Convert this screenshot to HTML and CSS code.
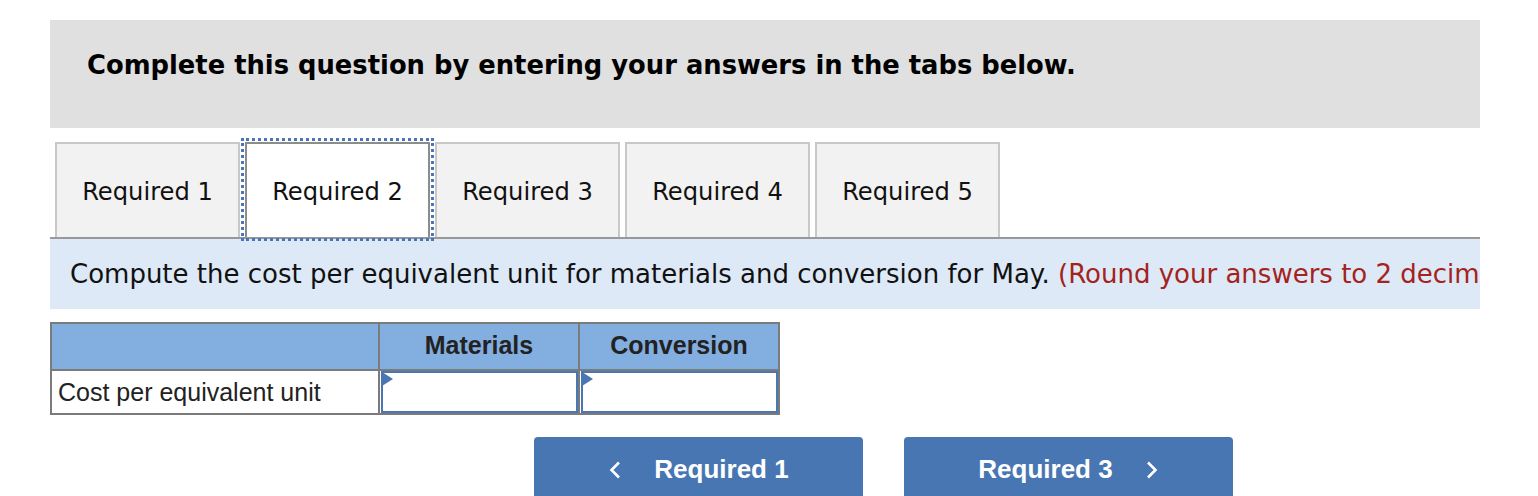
FILE: index.html
```html
<!DOCTYPE html>
<html>
<head>
<meta charset="utf-8">
<link rel="stylesheet" href="styles.css">
</head>
<body>
<div class="page">
  <div class="header">Complete this question by entering your answers in the tabs below.</div>
  <div class="tabs">
    <div class="tab">Required 1</div>
    <div class="tab active">Required 2</div>
    <div class="tab">Required 3</div>
    <div class="tab">Required 4</div>
    <div class="tab">Required 5</div>
  </div>
  <div class="prompt">Compute the cost per equivalent unit for materials and conversion for May. <span class="note">(Round your answers to 2 decimal places.)</span></div>
  <table class="grid">
    <tr class="head">
      <th class="label-col"></th>
      <th class="val-col">Materials</th>
      <th class="val-col">Conversion</th>
    </tr>
    <tr class="row">
      <td class="label">Cost per equivalent unit</td>
      <td class="cell"><div class="input"><span class="flag"></span></div></td>
      <td class="cell"><div class="input"><span class="flag"></span></div></td>
    </tr>
  </table>
  <div class="nav">
    <div class="btn">
      <svg class="chev" width="14" height="18" viewBox="0 0 14 18"><path d="M11 1.5 L3.5 9 L11 16.5" fill="none" stroke="#fff" stroke-width="2.6" stroke-linejoin="miter"/></svg>
      <span>Required 1</span>
    </div>
    <div class="btn">
      <span>Required 3</span>
      <svg class="chev" width="14" height="18" viewBox="0 0 14 18"><path d="M3 1.5 L10.5 9 L3 16.5" fill="none" stroke="#fff" stroke-width="2.6" stroke-linejoin="miter"/></svg>
    </div>
  </div>
</div>
</body>
</html>
```
FILE: styles.css
```css
html, body {
  margin: 0;
  padding: 0;
  background: #fff;
}
body {
  font-family: "DejaVu Sans", Verdana, sans-serif;
  color: #111;
  overflow: hidden;
}
.page {
  width: 1430px;
  margin-left: 50px;
  padding-top: 20px;
}
.header {
  background: #e0e0e0;
  height: 108px;
  box-sizing: border-box;
  padding: 29px 0 0 37px;
  font-weight: bold;
  font-size: 25.8px;
  line-height: 32px;
  color: #000;
  white-space: nowrap;
}
.tabs {
  display: flex;
  gap: 5px;
  padding-left: 5px;
  margin-top: 14px;
  height: 95px;
}
.tab {
  width: 185px;
  box-sizing: border-box;
  border: 2px solid #c8c8c8;
  border-bottom: none;
  background: #f2f2f2;
  font-size: 24.2px;
  color: #111;
  display: flex;
  align-items: center;
  justify-content: center;
  padding-top: 2px;
  white-space: nowrap;
}
.tab.active {
  background: #fff;
  border-color: #8c8c8c;
  outline: 3px dotted #4a76b8;
  outline-offset: 1px;
}
.prompt {
  border-top: 2px solid #999;
  background: #dde9f6;
  height: 72px;
  box-sizing: border-box;
  padding: 20px 0 0 20px;
  font-size: 26px;
  line-height: 30px;
  white-space: nowrap;
  overflow: hidden;
  color: #111;
}
.note {
  color: #a4231c;
}
.grid {
  margin-top: 13px;
  border-collapse: collapse;
  font-family: "Liberation Sans", Arial, sans-serif;
  color: #222;
}
.grid th, .grid td {
  border: 2px solid #7b7b7b;
  padding: 0;
}
.head th {
  background: #83aee0;
  height: 43px;
  font-size: 25px;
  font-weight: bold;
  text-align: center;
  vertical-align: middle;
  padding-bottom: 2px;
}
.label-col {
  width: 326px;
}
.val-col {
  width: 198px;
}
.row td {
  height: 42px;
}
.label {
  font-size: 25px;
  padding-left: 6px !important;
  vertical-align: middle;
  background: #fff;
}
.cell {
  background: #fff;
}
.input {
  position: relative;
  height: 42px;
  box-sizing: border-box;
  border: 2px solid #4a76b4;
  margin: 0 0 0 1px;
  background: #fff;
}
.flag {
  position: absolute;
  left: -1px;
  top: -1px;
  width: 0;
  height: 0;
  border-top: 7px solid transparent;
  border-bottom: 7px solid transparent;
  border-left: 11px solid #4a76b4;
}
.nav {
  display: flex;
  gap: 41px;
  margin-top: 22px;
  margin-left: 484px;
}
.btn {
  width: 329px;
  height: 70px;
  background: #4876b3;
  border-radius: 4px 4px 0 0;
  display: flex;
  align-items: flex-start;
  justify-content: center;
  gap: 32px;
  padding-top: 17px;
  box-sizing: border-box;
  color: #fff;
  font-family: "Liberation Sans", Arial, sans-serif;
  font-weight: bold;
  font-size: 26px;
  line-height: 30px;
}
.chev {
  margin-top: 7px;
}
```
